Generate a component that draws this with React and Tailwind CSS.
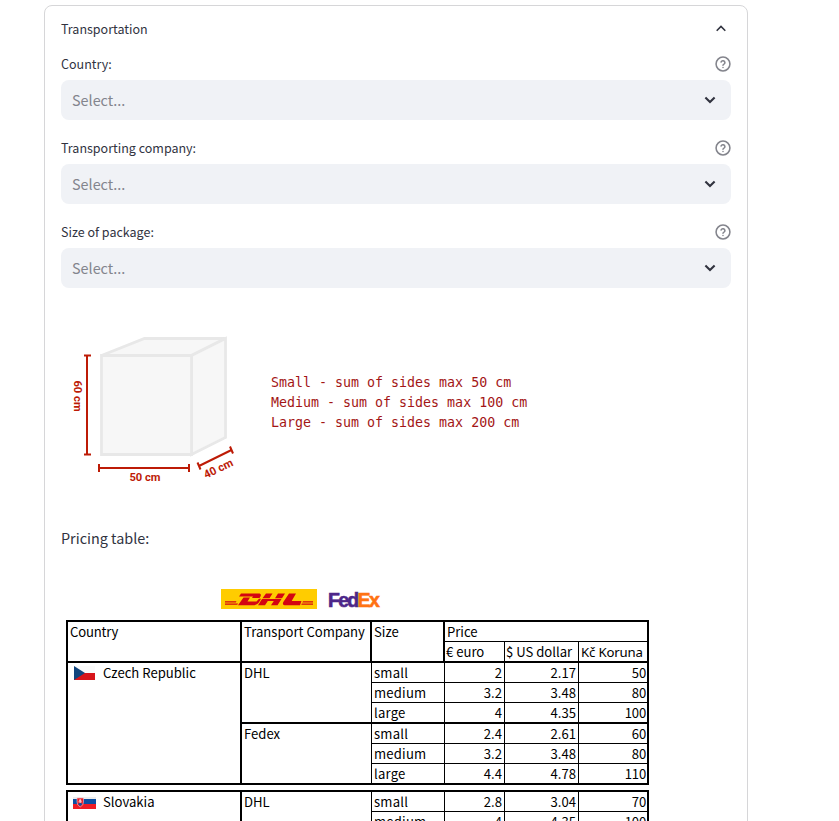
import React from "react";

const groups = [
  {
    country: "Czech Republic",
    flag: "cz",
    companies: [
      { name: "DHL", rows: [["small", "2", "2.17", "50"], ["medium", "3.2", "3.48", "80"], ["large", "4", "4.35", "100"]] },
      { name: "Fedex", rows: [["small", "2.4", "2.61", "60"], ["medium", "3.2", "3.48", "80"], ["large", "4.4", "4.78", "110"]] },
    ],
  },
  {
    country: "Slovakia",
    flag: "sk",
    companies: [
      { name: "DHL", rows: [["small", "2.8", "3.04", "70"], ["medium", "4", "4.35", "100"]] },
    ],
  },
];

function HelpIcon() {
  return (
    <svg width="16" height="16" viewBox="0 0 24 24" fill="none" stroke="#83848c" strokeWidth="2.3" strokeLinecap="round" strokeLinejoin="round">
      <circle cx="12" cy="12" r="10.4" />
      <path d="M9.1 9a3 3 0 0 1 5.8 1c0 2-2.9 2.6-2.9 4M12 17.3v.1" />
    </svg>
  );
}

function Field({ label }) {
  return (
    <div className="h-[84px]">
      <div className="flex h-8 items-center justify-between">
        <span className="text-[12.5px] leading-8">{label}</span>
        <HelpIcon />
      </div>
      <div className="flex h-10 items-center justify-between rounded-lg bg-[#f0f2f6] pl-[11px] pr-[15px]">
        <span className="text-[14.4px] leading-10 text-[#83858d]">Select...</span>
        <svg width="12" height="8" viewBox="0 0 12 8" fill="none" stroke="#31333f" strokeWidth="2.1">
          <path d="M1.4 1.5 6 6l4.600-4.500" />
        </svg>
      </div>
    </div>
  );
}

function Box() {
  return (
    <svg width="180" height="160" viewBox="70 330 180 160" className="shrink-0">
      <g fill="#f7f7f7" stroke="#e8e8e8" strokeWidth="2.8">
        <path d="M101.500 355.500 144.500 338.500H225.500L191.500 355.500Z" />
        <path d="M191.500 355.500 225.500 338.500V437.500L191.500 454.500Z" />
        <path d="M101.500 355.500H191.500V454.500H101.500Z" />
      </g>
      <g fill="none" stroke="#bd1b06" strokeWidth="2">
        <path d="M87 355.500V454.500M84 355.500H91M84 454.500H91" />
        <path d="M99 468H189M99 464V472M189 464V472" />
        <path d="M199 466 231.500 450M197.500 462.500 200.500 469.500M230 446.500 233 453.500" />
      </g>
      <g fill="#bd1b06" className="font-['Roboto',sans-serif] text-[11.2px] font-bold" textAnchor="middle">
        <text x="145" y="481">50 cm</text>
        <text transform="translate(74 396) rotate(90)">60 cm</text>
        <text transform="translate(220 472) rotate(-26)">40 cm</text>
      </g>
    </svg>
  );
}

function Logos() {
  return (
    <div className="ml-40 flex h-5 items-center">
      <svg width="96" height="20" viewBox="0 0 96 20">
        <path fill="#ffcc00" d="M0 0H96V20H0Z" />
        <g fill="#d40511">
          <path d="M20 4.500H37.500C41 4.500 40 7 38.500 9H31L32 7.500H18Z" />
          <path d="M22.500 8.500H29L26.500 12.500H35.500L38 9.700H40L38.500 12.500C37 15 35 16.300 31.500 16.300H17Z" />
          <path d="M45 4.500H51.500L48.500 9.300H54L57 4.500H64L61 9.300H41.500ZM41 10H60.500L56.500 16.300H50L52.800 12H46.800L44 16.300H37Z" />
          <path d="M68 4.500H75L70.700 12H80.500L79 16.300H65C61 16.300 61.500 14 63 12Z" />
          <path d="M4 14.400H17L16.300 15.800H4ZM4 12.300H15.500L14.800 13.500H4ZM82 12.300H92V13.500H81.300ZM80.800 14.400H92V15.800H80.300Z" />
        </g>
      </svg>
      <span className="ml-[11px] mt-[2px] font-['Liberation_Sans',sans-serif] text-[19.5px] font-bold leading-5 tracking-[-1.7px] text-[#4d2689] [-webkit-text-stroke:0.6px_currentColor]">
        Fed<span className="text-[#ff7212]">Ex</span>
      </span>
    </div>
  );
}

function Flag({ kind }) {
  if (kind === "cz") {
    return (
      <svg width="23" height="14" viewBox="0 0 23 14">
        <path fill="#fafafa" d="M1 0H22V7H1Z" />
        <path fill="#d7141a" d="M1 7H22V14H1Z" />
        <path fill="#11457e" d="M1 0 12 7 1 14Z" />
      </svg>
    );
  }
  return (
    <svg width="23" height="12" viewBox="0 0 23 12" className="mt-0.5">
      <path fill="#eeeeee" d="M0 0H23V3H0Z" />
      <path fill="#0b4ea2" d="M0 2H23V7H0Z" />
      <path fill="#ee1c25" d="M0 7H23V12H0Z" />
      <path fill="#ee1c25" stroke="#e9c5d3" strokeWidth=".6" d="M4 1H10.500V5Q10.500 8.500 7.200 10Q4 8.500 4 5Z" />
      <path fill="#0b4ea2" d="M5 7Q7.200 5 9.500 7L7.200 9Z" />
      <path stroke="#fff" strokeWidth=".7" d="M7.200 2V6M6 3.300H8.400M5.500 4.800H8.900" />
    </svg>
  );
}

function PriceRow({ row, last }) {
  return (
    <div className={last ? "flex h-[19px] leading-[20px]" : "flex h-5 border-b border-black leading-[20px]"}>
      <div className="w-[73px] border-r border-black pl-0.5 tracking-[0.2px]">{row[0]}</div>
      <div className="w-[60px] border-r border-black pr-0.5 text-right">{row[1]}</div>
      <div className="w-[74px] border-r border-black pr-0.5 text-right">{row[2]}</div>
      <div className="w-[68px] pr-px text-right tracking-[-0.2px]">{row[3]}</div>
    </div>
  );
}

function CountryGroup({ group }) {
  return (
    <div className="flex">
      <div className="flex w-[174px] items-start border-r-2 border-black pl-[5px]">
        <div className="flex h-5 items-center gap-[7px]">
          <Flag kind={group.flag} />
          <span className="leading-[20px]">{group.country}</span>
        </div>
      </div>
      <div className="w-[405px]">
        {group.companies.map((company, i) => (
          <div key={company.name} className={i > 0 ? "flex border-t-2 border-black" : "flex"}>
            <div className="w-[130px] border-r border-black pl-0.5 leading-[20px]">{company.name}</div>
            <div>
              {company.rows.map((row, j) => (
                <PriceRow key={row[0]} row={row} last={j === company.rows.length - 1} />
              ))}
            </div>
          </div>
        ))}
      </div>
    </div>
  );
}

function PricingTable() {
  return (
    <div className="ml-[5px] mt-[11px] w-[583px] font-['Noto_Sans_CJK_SC',sans-serif] text-[13.1px] text-black">
      <div className="border-2 border-black">
        <div className="flex h-[41px] border-b-2 border-black leading-[20px]">
          <div className="w-[174px] border-r-2 border-black pl-0.5 tracking-[-0.2px]">Country</div>
          <div className="w-[130px] whitespace-nowrap border-r-2 border-black pl-0.5">Transport Company</div>
          <div className="w-[73px] border-r-2 border-black pl-0.5">Size</div>
          <div className="w-[202px]">
            <div className="h-5 border-b border-black pl-0.5">Price</div>
            <div className="flex h-[19px] whitespace-nowrap">
              <div className="w-[60px] border-r border-black pl-[1px]">€ euro</div>
              <div className="w-[74px] border-r border-black pl-[1px]">$ US dollar</div>
              <div className="w-[68px] pl-0.5 font-['Noto_Sans',sans-serif] text-[13.2px] tracking-[-0.15px]">Kč Koruna</div>
            </div>
          </div>
        </div>
        <CountryGroup group={groups[0]} />
      </div>
      <div className="mt-[5px] border-2 border-black">
        <CountryGroup group={groups[1]} />
      </div>
    </div>
  );
}

export default function App() {
  return (
    <div className="h-[821px] overflow-hidden bg-white pl-11 pt-[5px] font-['Noto_Sans_CJK_SC',sans-serif] text-[#31333f]">
      <div className="h-[900px] w-[704px] rounded-lg border border-[#d6d6d8] px-4">
        <div className="flex h-[42px] items-center justify-between pr-[5px] pt-[4px]">
          <span className="text-[12.5px]">Transportation</span>
          <svg width="10" height="7" viewBox="0 0 10 7" fill="none" stroke="#31333f" strokeWidth="1.6" className="-mt-0.5">
            <path d="M.7 5.800 5 1.500l4.300 4.300" />
          </svg>
        </div>
        <Field label="Country:" />
        <Field label="Transporting company:" />
        <Field label="Size of package:" />
        <div className="ml-[9px] mt-[30px] flex">
          <Box />
          <div className="ml-[21px] mt-[43px] whitespace-pre font-['DejaVu_Sans_Mono',monospace] text-[13.3px] leading-5 text-[#a31515]">
            <div>Small - sum of sides max 50 cm</div>
            <div>Medium - sum of sides max 100 cm</div>
            <div>Large - sum of sides max 200 cm</div>
          </div>
        </div>
        <div className="mt-9 h-6 text-[14.4px] leading-6">Pricing table:</div>
        <div className="mt-[39px]">
          <Logos />
          <PricingTable />
        </div>
      </div>
    </div>
  );
}
